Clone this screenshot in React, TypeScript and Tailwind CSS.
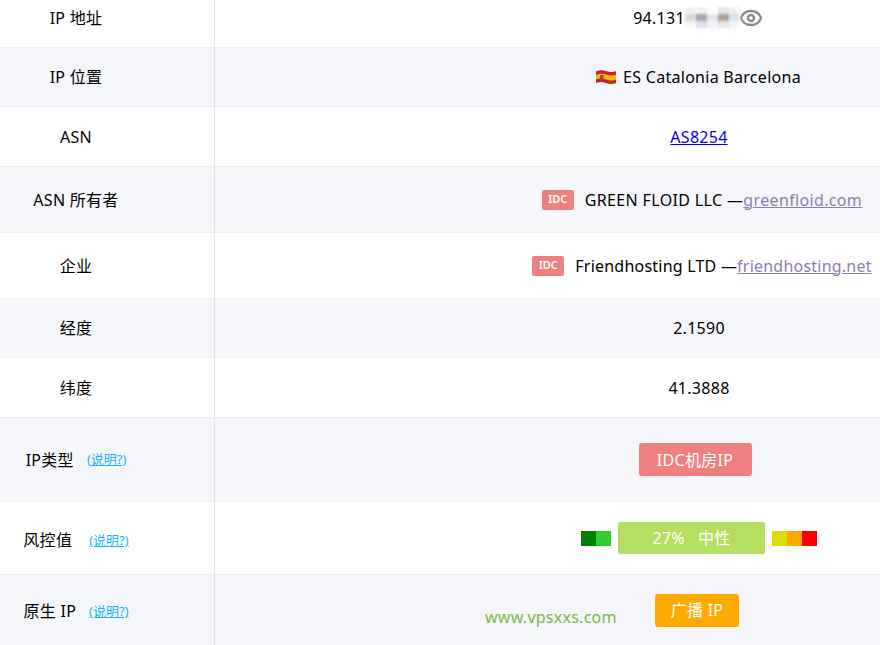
import { Eye } from 'lucide-react';
import type { ReactNode } from 'react';

function Row({ label, height, tinted, children, shift, contentClass }: {
  label: ReactNode;
  height: string;
  tinted?: boolean;
  children: ReactNode;
  shift?: string;
  contentClass?: string;
}) {
  return (
    <div className={`flex border-b border-[#eeeff2] ${height} ${tinted ? 'bg-[#f5f6fa]' : 'bg-white'}`}>
      <div className={`flex w-[215px] shrink-0 items-center justify-center border-r border-[#e2e4e8] pr-[62px] ${shift ?? ''}`}>
        {label}
      </div>
      <div className={`flex w-[968px] shrink-0 items-center justify-center ${shift ?? ''} ${contentClass ?? ''}`}>
        {children}
      </div>
    </div>
  );
}

function Help({ className }: { className?: string }) {
  return <a href="#" className={`text-[13px] tracking-normal text-[#18b4fa] underline ${className ?? ''}`}>(说明?)</a>;
}

function IdcTag() {
  return (
    <span className="mr-[11px] flex h-[20px] w-[32px] items-center justify-center rounded-[2px] bg-[#f08080] text-[11px] font-semibold tracking-normal text-white">
      IDC
    </span>
  );
}

function SpainFlag() {
  return (
    <svg width="22" height="17" viewBox="0 0 22 17" className="mr-[6px]">
      <path d="M1 2.500C5 0.500 8 1 11 2s7 1.500 10 0v12c-3 1.500-7 1-10 0s-6-1.500-10 0z" fill="#c8202c" />
      <path d="M1 6C5 4 8 4.500 11 5.500s7 1.500 10 0v5c-3 1.500-7 1-10 0s-6-1.500-10 0z" fill="#f5b914" />
      <rect x="5" y="6" width="3.500" height="4.500" rx="0.500" fill="#b5452c" />
    </svg>
  );
}

const mosaic = [
  ['bg-[#f3f1f0]', 'bg-[#f0f0f3]', 'bg-[#ffffff]', 'bg-[#e3e4ea]', 'bg-[#eef1f6]'],
  ['bg-[#dcd9d8]', 'bg-[#a9a9b5]', 'bg-[#e6e6ec]', 'bg-[#ada199]', 'bg-[#d9e4f0]'],
  ['bg-[#f6f5f5]', 'bg-[#e0e0e7]', 'bg-[#f3f3f6]', 'bg-[#e8e6e6]', 'bg-[#f2f6fa]'],
];

export default function App() {
  return (
    <div
      className="relative h-[645px] w-[880px] overflow-hidden bg-white text-[16px] tracking-[0.28px] text-black"
      style={{ fontFamily: '"Noto Sans", "Noto Sans CJK SC", sans-serif' }}
    >
      <Row label="IP 地址" height="h-[48px]" shift="pb-[12px]" contentClass="pr-[2px]">
        <div className="flex items-center">
          <span>94.131</span>
          <div className="flex flex-col blur-[0.8px]">
            {mosaic.map((row, i) => (
              <div key={i} className="flex">
                {row.map((c, j) => <span key={j} className={`h-[7px] w-[11px] ${c}`} />)}
              </div>
            ))}
          </div>
          <Eye size={24} strokeWidth={2.4} className="-ml-[1px] text-[#8a8a8a]" />
        </div>
      </Row>
      <Row label="IP 位置" tinted height="h-[59px]" contentClass="pr-[2px]">
        <SpainFlag />
        <span>ES Catalonia Barcelona</span>
      </Row>
      <Row label="ASN" height="h-[60px]">
        <a href="#" className="text-[#0000ee] underline">AS8254</a>
      </Row>
      <Row label="ASN 所有者" tinted height="h-[66px]">
        <div className="flex items-center pl-[6px] tracking-[0.35px]">
          <IdcTag />
          <span>GREEN FLOID LLC —</span>
          <a href="#" className="text-[#8f7cb5] underline">greenfloid.com</a>
        </div>
      </Row>
      <Row label="企业" height="h-[66px]">
        <div className="flex items-center pl-[6px] tracking-[0.22px]">
          <IdcTag />
          <span>Friendhosting LTD —</span>
          <a href="#" className="text-[#8f7cb5] underline">friendhosting.net</a>
        </div>
      </Row>
      <Row label="经度" tinted height="h-[59px]">2.1590</Row>
      <Row label="纬度" height="h-[60px]">41.3888</Row>
      <Row
        tinted
        height="h-[84px]"
        contentClass="pr-[8px]"
        label={
          <div className="flex items-center gap-[13px]">
            <span>IP类型</span>
            <Help />
          </div>
        }
      >
        <span className="flex h-[33px] w-[113px] items-center justify-center rounded-[3px] bg-[#f08080] text-white">
          IDC机房IP
        </span>
      </Row>
      <Row
        height="h-[73px]"
        label={
          <div className="flex items-center gap-[17px] pt-[4px]">
            <span>风控值</span>
            <Help className="mt-[1px]" />
          </div>
        }
      >
        <div className="flex items-center">
          <span className="h-[15px] w-[15px] bg-[#008000]" />
          <span className="h-[15px] w-[15px] bg-[#32cd32]" />
          <span className="mx-[7px] flex h-[32px] w-[147px] items-center justify-center gap-[13px] rounded-[2px] bg-[#b4de5f] text-white">
            <span>27%</span>
            <span>中性</span>
          </span>
          <span className="h-[15px] w-[15px] bg-[#dddd00]" />
          <span className="h-[15px] w-[15px] bg-[#ffaa00]" />
          <span className="h-[15px] w-[15px] bg-[#ff0000]" />
        </div>
      </Row>
      <Row
        tinted
        height="h-[71px]"
        contentClass="pr-[4px]"
        label={
          <div className="flex items-center gap-[13px] pt-[2px]">
            <span>原生 IP</span>
            <Help className="mt-[2px]" />
          </div>
        }
      >
        <span className="flex h-[33px] w-[84px] items-center justify-center rounded-[3px] bg-[#ffaa00] text-white">
          广播 IP
        </span>
      </Row>
      <span className="absolute left-[485px] top-[605px] text-[16px] tracking-[0.25px] text-[#7ab648]">
        www.vpsxxs.com
      </span>
    </div>
  );
}
